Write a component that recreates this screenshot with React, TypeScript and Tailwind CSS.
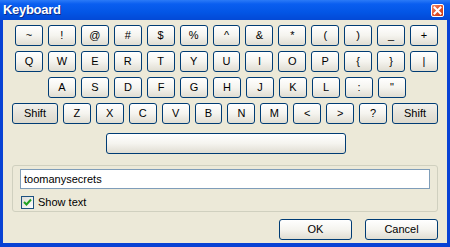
import React from 'react';

const rows: string[][] = [
  ['~', '!', '@', '#', '$', '%', '^', '&', '*', '(', ')', '_', '+'],
  ['Q', 'W', 'E', 'R', 'T', 'Y', 'U', 'I', 'O', 'P', '{', '}', '|'],
  ['A', 'S', 'D', 'F', 'G', 'H', 'J', 'K', 'L', ':', '"'],
  ['Z', 'X', 'C', 'V', 'B', 'N', 'M', '<', '>', '?'],
];

const keyBase =
  'h-[21px] flex items-center justify-center rounded-[3px] border border-[#003c74] text-[11px] text-black leading-none';
const keyFace = 'bg-linear-to-b from-white via-[#f5f4ef] to-[#e0ddd2]';
const shiftFace = 'bg-linear-to-b from-[#f2f1ec] via-[#e6e3da] to-[#dcd8cc]';

const Key: React.FC<{ label: string; wide?: boolean; shift?: boolean }> = ({ label, wide, shift }) => (
  <div className={`${keyBase} ${shift ? shiftFace : keyFace} ${wide ? 'w-[46px]' : 'w-[28px]'}`}>{label}</div>
);

export default function App() {
  return (
    <div
      className="w-[450px] h-[247px] flex flex-col bg-[#0842d4] select-none"
      style={{ fontFamily: '"Liberation Sans", Arial, sans-serif' }}
    >
      {/* title bar */}
      <div className="h-[20px] flex items-center justify-between pl-[3px] pr-[6px] bg-[linear-gradient(to_bottom,#2b7af7_0%,#0a5ef0_20%,#0356e6_60%,#0349d6_100%)]">
        <span className="text-white font-bold text-[13px] tracking-[-0.3px] [text-shadow:1px_1px_0_#0a2c8a]">Keyboard</span>
        <div className="w-[13px] h-[13px] rounded-[2px] border border-white bg-linear-to-br from-[#f28b6a] via-[#e2522b] to-[#c63a14] flex items-center justify-center">
          <svg width="9" height="9" viewBox="0 0 9 9">
            <path d="M1.5 1.5 L7.5 7.5 M7.5 1.5 L1.5 7.5" stroke="white" strokeWidth="2" strokeLinecap="square" />
          </svg>
        </div>
      </div>

      {/* client area */}
      <div className="flex-1 mx-[3px] mb-[4px] bg-[#ece9d8] flex flex-col px-[9px] pt-[5px]">
        <div className="flex flex-col gap-[5px]">
          <div className="flex gap-[5px] pl-[3px]">
            {rows[0].map((k) => (
              <Key key={k} label={k} />
            ))}
          </div>
          <div className="flex gap-[5px] pl-[3px]">
            {rows[1].map((k) => (
              <Key key={k} label={k} />
            ))}
          </div>
          <div className="flex gap-[5px] pl-[36px]">
            {rows[2].map((k) => (
              <Key key={k} label={k} />
            ))}
          </div>
          <div className="flex gap-[5px]">
            <Key label="Shift" wide shift />
            {rows[3].map((k) => (
              <Key key={k} label={k} />
            ))}
            <Key label="Shift" wide shift />
          </div>
        </div>

        <div className="pl-[94px] mt-[9px]">
          <div className={`${keyBase} ${keyFace} w-[240px]`} />
        </div>

        {/* group */}
        <div className="mt-[11px] h-[47px] rounded-[3px] border border-[#d0d0bf] px-[7px] pt-[3px]">
          <div className="h-[20px] border border-[#7f9db9] bg-white flex items-center px-[3px] text-[11px] text-black">
            toomanysecrets
          </div>
          <div className="flex items-center mt-[5px] pl-[1px] gap-[4px]">
            <div className="w-[13px] h-[13px] border border-[#1c5180] bg-linear-to-br from-[#dcdcd7] to-white flex items-center justify-center">
              <svg width="9" height="9" viewBox="0 0 9 9">
                <path d="M1 4 L3.5 6.5 L8 1.5" fill="none" stroke="#21a121" strokeWidth="2" />
              </svg>
            </div>
            <span className="text-[11px] text-black">Show text</span>
          </div>
        </div>

        {/* buttons */}
        <div className="flex justify-end gap-[13px] mt-[7px]">
          <div className={`${keyBase} ${keyFace} w-[73px]`}>OK</div>
          <div className={`${keyBase} ${keyFace} w-[73px]`}>Cancel</div>
        </div>
      </div>
    </div>
  );
}
